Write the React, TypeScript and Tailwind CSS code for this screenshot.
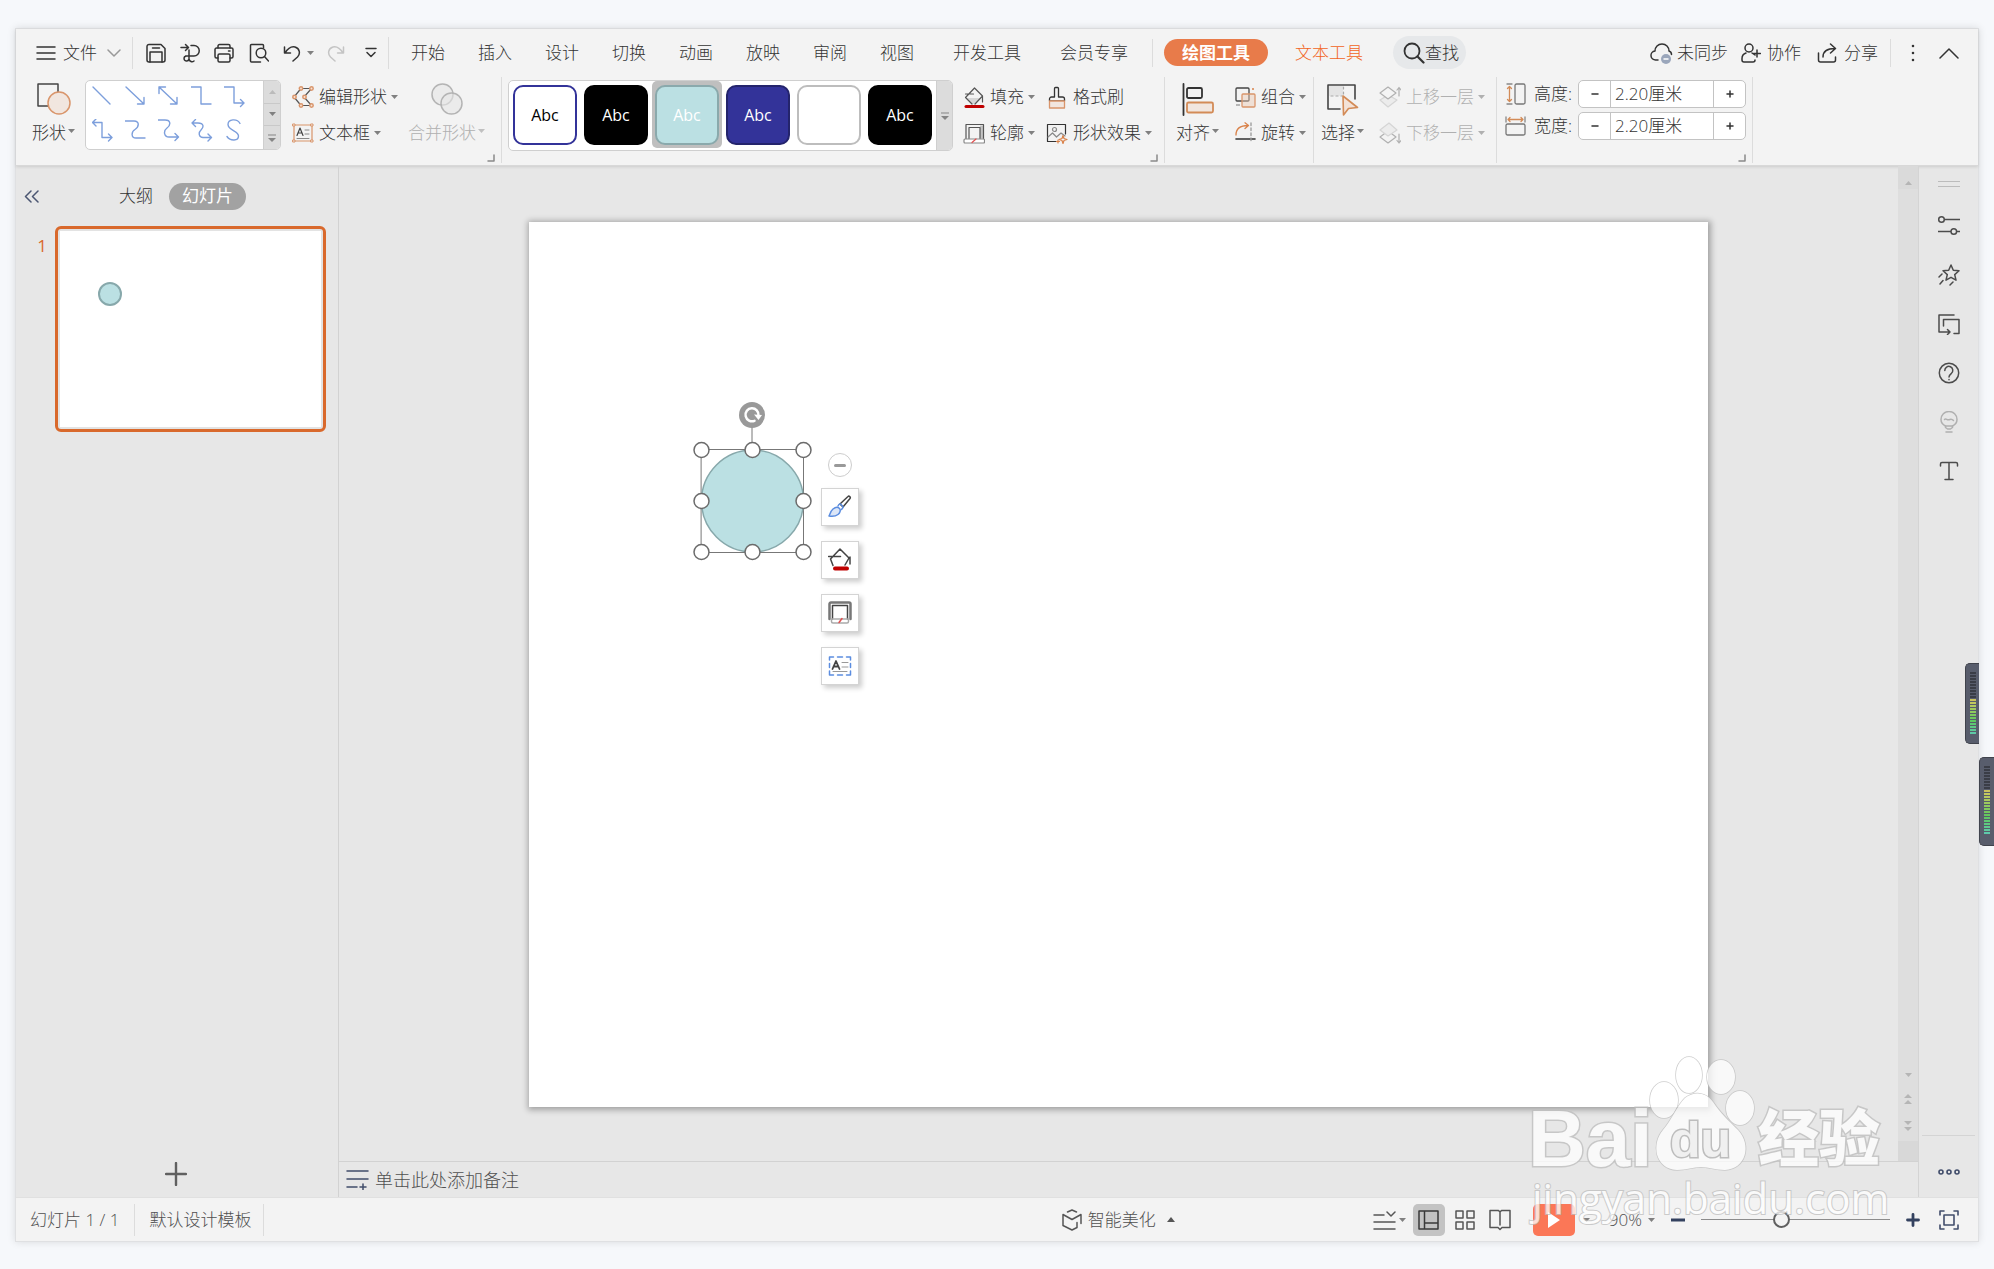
import React, { useState } from "react";

const FONT = "font-['Open_Sans','Noto_Sans_CJK_SC',sans-serif]";

type SvgProps = {
  w: number;
  h: number;
  className?: string;
  sw?: number;
  children: React.ReactNode;
};

function Svg({ w, h, className = "", sw = 1.5, children }: SvgProps) {
  return (
    <svg
      width={w}
      height={h}
      viewBox={`0 0 ${w} ${h}`}
      fill="none"
      stroke="currentColor"
      strokeWidth={sw}
      strokeLinecap="round"
      strokeLinejoin="round"
      className={`shrink-0 ${className}`}
      aria-hidden="true"
    >
      {children}
    </svg>
  );
}

function Caret({ className = "text-[#808080]" }: { className?: string }) {
  return (
    <Svg w={7} h={4} className={className}>
      <path d="M0 0h7L3.5 4z" fill="currentColor" stroke="none" />
    </Svg>
  );
}

function VSep({ className = "" }: { className?: string }) {
  return <div className={`w-px shrink-0 bg-[#dcdcdc] ${className}`} />;
}

function Launcher({ className = "" }: { className?: string }) {
  return (
    <button aria-label="更多设置" className={`h-2 w-2 shrink-0 self-end ${className}`}>
      <Svg w={8} h={8} className="text-[#8a8a8a]">
        <path d="M7 1v6H1" />
      </Svg>
    </button>
  );
}

/* ---------- icons ---------- */

const FillIcon = () => (
  <Svg w={22} h={22} sw={1.2} className="text-[#555]">
    <path d="M3 12h14l-6 6H9z" fill="#d6d6d6" stroke="none" />
    <path d="M9 18 2.500 11.500 11.500 2l8 8L12 18M2.500 8h8M19.500 10v6" />
    <path d="M3 20.500h17" stroke="#c00000" strokeWidth="3" />
  </Svg>
);

const OutlineIcon = () => (
  <Svg w={22} h={22} sw={1.2} className="text-[#555]">
    <path d="M17 3.500h3.500v13H17z" fill="#c4c4c4" stroke="none" />
    <path d="M3 16.500v-14h17.500v14M6 16.500v-11h11v11" />
    <rect x="1" y="17" width="20.500" height="4" rx="1" fill="#fff" stroke="#888" />
    <path d="m9 20.500 4-3.500" stroke="#e05050" />
  </Svg>
);

const ZoomLens = () => (
  <Svg w={22} h={22} sw={1.8}>
    <circle cx="9" cy="9" r="7.500" />
    <path d="m14.500 14.500 6 6" strokeWidth="2.200" />
  </Svg>
);

const quickIcons = [
  {
    label: "保存",
    art: (
      <>
        <path d="M3 1.500h12l4 4V17a2 2 0 0 1-2 2H3a2 2 0 0 1-2-2V3.500a2 2 0 0 1 2-2z" />
        <path d="M4 19V9h12v10M6.500 5h7" />
      </>
    ),
  },
  {
    label: "输出为PDF",
    art: (
      <>
        <path d="M1 4.500h7M5.500 1.500l3 3-3 3" />
        <path d="M11 2.500h3a5 5 0 0 1 0 10.500H5.500M9 7v9a2.500 2.500 0 1 1-2.500-3H9M9 16c.5 2.500 3 3.500 5 2" />
      </>
    ),
  },
  {
    label: "打印",
    art: (
      <>
        <path d="M4 5V3a1.500 1.500 0 0 1 1.500-1.500h9A1.500 1.500 0 0 1 16 3v2" />
        <path d="M4 15H2.500A1.500 1.500 0 0 1 1 13.500v-7A1.500 1.500 0 0 1 2.500 5h15A1.500 1.500 0 0 1 19 6.500v7a1.500 1.500 0 0 1-1.500 1.500H16M14.500 8h1.500" />
        <rect x="4" y="11" width="12" height="8" rx="1.500" />
      </>
    ),
  },
  {
    label: "打印预览",
    art: (
      <>
        <path d="M15.500 5V2.500a1 1 0 0 0-1-1h-11a1 1 0 0 0-1 1V18a1 1 0 0 0 1 1h9" />
        <circle cx="13" cy="10" r="4.800" />
        <path d="m16.500 13.500 4 4.500" />
      </>
    ),
  },
];

const lineShapes = [
  <path d="m1 1 17 17" />,
  <path d="m1 1 18 17M12.500 18H19v-6.500" />,
  <path d="m1 1 18 17M12.500 18H19v-6.500M1 7.500V1h6.500" />,
  <path d="M0 1h10v17h10" />,
  <path d="M0 1h10v16h9.500M16.500 13.500 20 17l-3.500 3.500" />,
  <path d="M1 3.500h9v15h9.500M16.500 15 20 18.500 16.500 22M4 0 .5 3.500 4 7" />,
  <path d="M0 2h9c6 0 5 6 1 8.500S6 19 11 19h9" />,
  <path d="M0 1h7c6 0 6 5 2 8s-3 9 2 9h9M17 14.500l3.500 3.500L17 21.500" />,
  <path d="M1 4h6c6 0 6 4 3 7s-2 7.500 2 7.500h8M17 15l3.500 3.500L17 22M4.500.5 1 4l3.500 3.500" />,
  <path d="M16 4.500C13-1 4 0 4 5.500c0 6 10.500 6 10.500 11.500 0 5-8 5.500-11.500.5" />,
];

const styleTiles = [
  { text: "Abc", cls: "border-[#333399] bg-white text-black" },
  { text: "Abc", cls: "border-black bg-black text-white" },
  { text: "Abc", cls: "border-[#8aa9ac] bg-[#bbe0e3] text-white", on: true },
  { text: "Abc", cls: "border-[#24246c] bg-[#333399] text-white" },
  { text: "", cls: "border-[#bdbdbd] bg-white text-white" },
  { text: "Abc", cls: "border-black bg-black text-white" },
];

/* ---------- header ---------- */

function MenuRow() {
  const tabs = ["开始", "插入", "设计", "切换", "动画", "放映", "审阅", "视图"];
  return (
    <div className="flex h-12 items-center pb-px pl-5 pr-[19px]">
      <button className="flex items-center">
        <Svg w={20} h={14}>
          <path d="M1 1h18M1 7h18M1 13h18" />
        </Svg>
        <span className="ml-[7px]">文件</span>
        <Svg w={14} h={8} className="ml-[10px] text-[#999]">
          <path d="m1 1 6 6 6-6" />
        </Svg>
      </button>
      <VSep className="ml-[11px] h-8" />
      <div className="ml-[13px] flex gap-[13px]">
        {quickIcons.map((q) => (
          <button key={q.label} aria-label={q.label}>
            <Svg w={21} h={20}>
              {q.art}
            </Svg>
          </button>
        ))}
      </div>
      <button aria-label="撤销" className="ml-[14px] flex items-center gap-[6px]">
        <Svg w={18} h={18}>
          <path d="M1.500 3v6h6M2 9c2.500-4 6-7 10-6 5 1.500 5.500 7 2.500 10l-4.500 4" />
        </Svg>
        <Caret />
      </button>
      <button aria-label="恢复" className="ml-[13px] text-[#c4c4c4]">
        <Svg w={18} h={18}>
          <path d="M16.500 3v6h-6M16 9c-2.500-4-6-7-10-6C1 4.500.5 10 3.500 13L8 17" />
        </Svg>
      </button>
      <button aria-label="自定义快速访问" className="ml-5">
        <Svg w={12} h={11}>
          <path d="M1 1.500h10M2 5.500l4 4 4-4" />
        </Svg>
      </button>
      <VSep className="ml-[11px] h-8" />
      <nav className="ml-[22px] flex items-center">
        <div className="flex gap-[33px]">
          {tabs.map((t) => (
            <button key={t}>{t}</button>
          ))}
        </div>
        <button className="ml-[39px]">开发工具</button>
        <button className="ml-[39px]">会员专享</button>
        <VSep className="ml-6 h-7" />
        <button className="ml-[11px] h-[27px] rounded-full bg-[#e87b4a] px-[18px] font-bold text-white">
          绘图工具
        </button>
        <button className="ml-[27px] text-[#f26322]">文本工具</button>
        <button className="ml-[30px] flex h-[33px] items-center rounded-full bg-[#e6e8ea] pl-[10px] pr-[7px]">
          <ZoomLens />
          <span>查找</span>
        </button>
      </nav>
      <div className="ml-auto flex items-center">
        <button className="flex items-center gap-1">
          <Svg w={23} h={22}>
            <path d="M8 18H6a4.500 4.500 0 0 1-1-9C5 5 8 2 12 2s7 3 7 7c1.500.5 2.500 2 2.500 3.500" />
            <circle cx="16" cy="17" r="5" fill="#9aa6bb" stroke="none" />
            <path d="M14 17h4" stroke="#fff" />
          </Svg>
          <span>未同步</span>
        </button>
        <button className="ml-[13px] flex items-center gap-[6px]">
          <Svg w={20} h={20}>
            <circle cx="8" cy="5" r="4" />
            <path d="M5 10c-3 1-4 3-4 5.500V17a2 2 0 0 0 2 2h9a2 2 0 0 0 2-2M11 10l3 2M16 7v7M12.500 10.500h7" />
          </Svg>
          <span>协作</span>
        </button>
        <button className="ml-4 flex items-center gap-[6px]">
          <Svg w={21} h={20}>
            <path d="M1.500 10v7a2 2 0 0 0 2 2h13a2 2 0 0 0 2-2v-3M6 14c0-5 4-8.500 12-8.500M13.500 1l5 4.500-5 4.500" />
          </Svg>
          <span>分享</span>
        </button>
        <VSep className="ml-3 h-7" />
        <button aria-label="更多" className="ml-5">
          <Svg w={4} h={18}>
            <path d="M2 2v0M2 9v0M2 16v0" strokeWidth="2.600" />
          </Svg>
        </button>
        <button aria-label="收起功能区" className="ml-6">
          <Svg w={20} h={12}>
            <path d="m1 11 9-9 9 9" />
          </Svg>
        </button>
      </div>
    </div>
  );
}

type BtnProps = {
  icon: React.ReactNode;
  label: string;
  caret?: boolean;
  disabled?: boolean;
};

function BigButton({ icon, label, disabled }: BtnProps) {
  return (
    <button
      disabled={disabled}
      className={`flex shrink-0 flex-col items-center ${disabled ? "text-[#b0b0b0]" : ""}`}
    >
      <span className="flex h-10 items-center">{icon}</span>
      <span className="flex h-7 items-center gap-[2px]">
        {label}
        <Caret className={disabled ? "mb-1 text-[#c0c0c0]" : "mb-1 text-[#808080]"} />
      </span>
    </button>
  );
}

function RowButton({ icon, label, caret = true, disabled }: BtnProps) {
  return (
    <button
      disabled={disabled}
      className={`flex h-9 items-center ${disabled ? "text-[#b0b0b0]" : ""}`}
    >
      <span className="flex w-[22px] justify-center">{icon}</span>
      <span className="ml-[5px]">{label}</span>
      {caret && (
        <Caret className={disabled ? "ml-1 text-[#b0b0b0]" : "ml-1 text-[#808080]"} />
      )}
    </button>
  );
}

function SizeField({ id, label, icon }: { id: string; label: string; icon: React.ReactNode }) {
  const [value, setValue] = useState("2.20厘米");
  const step = (d: number) => setValue((parseFloat(value) + d).toFixed(2) + "厘米");
  return (
    <div className="flex items-center">
      <span className="flex w-[21px] justify-center">{icon}</span>
      <label htmlFor={id} className="ml-2 w-[44px]">
        {label}
      </label>
      <div className="flex h-7 w-[168px] overflow-hidden rounded-[5px] border border-[#c3c3c3] bg-white">
        <button
          aria-label="减小"
          onClick={() => step(-0.1)}
          className="flex w-8 items-center justify-center border-r border-[#c3c3c3]"
        >
          <Svg w={8} h={8}>
            <path d="M1 4h6" />
          </Svg>
        </button>
        <input
          id={id}
          value={value}
          onChange={(e) => setValue(e.target.value)}
          className="min-w-0 flex-1 pl-1 outline-none"
        />
        <button
          aria-label="增大"
          onClick={() => step(0.1)}
          className="flex w-8 items-center justify-center border-l border-[#c3c3c3]"
        >
          <Svg w={8} h={8}>
            <path d="M1 4h6M4 1v6" />
          </Svg>
        </button>
      </div>
    </div>
  );
}

function Ribbon() {
  const [style, setStyle] = useState(2);
  return (
    <div className="flex h-[88px] pb-[2px] pl-4">
      <div className="flex pt-[2px]">
        <BigButton
          label="形状"
          icon={
            <Svg w={34} h={32}>
              <rect x="1" y="1" width="20" height="22" stroke="#444" />
              <circle cx="22" cy="20" r="11" fill="#f1e6df" stroke="#d9956b" />
            </Svg>
          }
        />
        <div className="ml-[10px] mt-px flex h-[70px] w-[196px] overflow-hidden rounded-[5px] border border-[#cfcfcf] bg-white">
          <div className="grid flex-1 grid-cols-[repeat(5,22px)] gap-x-[11px] gap-y-2 py-[5px] pl-[6px] text-[#7d9fdc]">
            {lineShapes.map((s, i) => (
              <button key={i} aria-label={`线条 ${i + 1}`} className="flex">
                <Svg w={22} h={24} sw={1.4}>
                  {s}
                </Svg>
              </button>
            ))}
          </div>
          <div className="grid w-[17px] grid-rows-3 divide-y divide-[#c9c9c9] border-l border-[#cfcfcf] bg-[#dcdcdc]">
            <button aria-label="上一行" className="flex items-center justify-center">
              <Caret className="rotate-180 text-[#bbb]" />
            </button>
            <button aria-label="下一行" className="flex items-center justify-center">
              <Caret />
            </button>
            <button aria-label="全部形状" className="flex items-center justify-center">
              <Svg w={8} h={8} className="text-[#858585]">
                <path d="M0 1h8" strokeWidth="1" />
                <path d="M0 4h8L4 8z" fill="currentColor" stroke="none" />
              </Svg>
            </button>
          </div>
        </div>
        <div className="ml-[11px] flex flex-col">
          <RowButton
            label="编辑形状"
            icon={
              <Svg w={22} h={22}>
                <path d="M19.500 2.500H9L2 11l7 8.500h10.500L12 11z" stroke="#555" strokeWidth="1.200" />
                <g fill="#f6e4d8" stroke="#d9956b">
                  <circle cx="19.500" cy="2.500" r="1.700" />
                  <circle cx="9" cy="2.500" r="1.700" />
                  <circle cx="2.500" cy="11" r="1.700" />
                  <circle cx="9" cy="19.500" r="1.700" />
                  <circle cx="19.500" cy="19.500" r="1.700" />
                  <circle cx="12.500" cy="11" r="1.700" />
                </g>
              </Svg>
            }
          />
          <RowButton
            label="文本框"
            icon={
              <Svg w={22} h={20} sw={1.2}>
                <rect x="2" y="2" width="18" height="16" stroke="#d9956b" />
                <path d="M5 12.500 8 5l3 7.500M6 10h4" stroke="#444" />
                <path d="M13 7h4M13 11h4M5 15.500h12" stroke="#888" strokeWidth="1" />
                <path d="M1 1h2v2H1zM19 1h2v2h-2zM1 17h2v2H1zM19 17h2v2h-2z" fill="#f4f4f4" stroke="#d9956b" strokeWidth="1" />
              </Svg>
            }
          />
        </div>
        <div className="ml-[10px] flex">
          <BigButton
            label="合并形状"
            disabled
            icon={
              <Svg w={32} h={32} className="text-[#b4b4b4]">
                <circle cx="11.500" cy="11.500" r="10.500" fill="#ebebeb" />
                <circle cx="20.500" cy="20.500" r="10.500" fill="#e6e6e6" fillOpacity=".6" />
              </Svg>
            }
          />
        </div>
        <Launcher className="mb-px ml-[2px]" />
      </div>

      <VSep className="ml-[6px]" />
      <div className="flex pt-[3px]">
        <div className="ml-[6px] flex h-[71px] overflow-hidden rounded-[5px] border border-[#cfcfcf] bg-white">
          <div className="flex items-start pl-px">
            {styleTiles.map((t, i) => (
              <button
                key={i}
                aria-label={`样式 ${i + 1}`}
                onClick={() => setStyle(i)}
                className={`mr-px flex h-[67px] w-[70px] items-center justify-center rounded-[5px] ${
                  style === i ? "bg-[#bfbfbf]" : ""
                }`}
              >
                <span
                  className={`flex h-[60px] w-16 items-center justify-center rounded-[10px] border-2 text-base font-normal ${t.cls}`}
                >
                  {t.text}
                </span>
              </button>
            ))}
          </div>
          <button
            aria-label="更多样式"
            className="flex w-4 items-center justify-center border-l border-[#cfcfcf] bg-[#dcdcdc]"
          >
            <Svg w={8} h={8} className="text-[#858585]">
              <path d="M0 1h8" strokeWidth="1" />
              <path d="M0 4h8L4 8z" fill="currentColor" stroke="none" />
            </Svg>
          </button>
        </div>
        <div className="-mt-px ml-[10px] flex flex-col">
          <RowButton label="填充" icon={<FillIcon />} />
          <RowButton label="轮廓" icon={<OutlineIcon />} />
        </div>
        <div className="-mt-px ml-[11px] flex flex-col">
          <RowButton
            label="格式刷"
            caret={false}
            icon={
              <Svg w={18} h={23} sw={1.3}>
                <path d="M6.500 11V2.500a1 1 0 0 1 1-1h2a1 1 0 0 1 1 1V11h4a2 2 0 0 1 2 2v2h-15v-2a2 2 0 0 1 2-2z" />
                <path d="M1.500 15h15v7h-15z" fill="#f1e6df" stroke="#d9956b" />
              </Svg>
            }
          />
          <RowButton
            label="形状效果"
            icon={
              <Svg w={22} h={22} sw={1.2}>
                <path d="M10 19.500H1.500v-17h18V12" />
                <circle cx="8.500" cy="7.500" r="2" stroke="#888" />
                <path d="m2 15 4.500-4 4 4 4.500-4 4 3" stroke="#888" />
                <path d="M17 13.500l1 3 3 1-3 1-1 3-1-3-3-1 3-1zM12 18v3M10.500 19.500h3" stroke="#d9824a" />
              </Svg>
            }
          />
        </div>
        <Launcher className="-ml-[2px] mb-px" />
      </div>

      <VSep className="ml-[6px]" />
      <div className="flex pt-[2px]">
        <div className="ml-[11px] flex">
          <BigButton
            label="对齐"
            icon={
              <Svg w={32} h={33} sw={1.8}>
                <path d="M1.500 1v31" stroke="#333" />
                <rect x="5" y="5" width="15" height="10" rx="1.500" stroke="#333" />
                <rect x="5" y="19.500" width="26" height="10" rx="1.500" fill="#f1e6df" stroke="#d38b57" />
              </Svg>
            }
          />
        </div>
        <div className="ml-[15px] flex flex-col">
          <RowButton
            label="组合"
            icon={
              <Svg w={22} h={22} sw={1.3}>
                <rect x="2" y="2" width="13" height="13" rx="1" stroke="#444" />
                <rect x="8" y="8" width="13" height="13" rx="1" fill="#eac9b3" fillOpacity=".45" stroke="#d9956b" />
                <path d="M3 19v0M5 19v0" stroke="#444" />
                <path d="M19 3v0" stroke="#d9824a" strokeWidth="2" />
              </Svg>
            }
          />
          <RowButton
            label="旋转"
            icon={
              <Svg w={22} h={22} sw={1.3}>
                <path d="M2 13C2 7 6 3.500 14 3.500M11 .8l3.500 2.700L11 6.500" stroke="#d9824a" />
                <path d="M2 17h19" stroke="#333" strokeWidth="1.600" />
                <path d="M17 1v20" stroke="#999" strokeDasharray="2.500 2.500" />
              </Svg>
            }
          />
        </div>
      </div>

      <VSep className="ml-[7px]" />
      <div className="flex pt-[2px]">
        <div className="ml-[7px] flex">
          <BigButton
            label="选择"
            icon={
              <Svg w={33} h={33} sw={1.6}>
                <path d="M2 2h27v14M2 2v24h12" stroke="#444" />
                <path d="M3 3h14v10H3z" fill="#e4e4e4" stroke="none" />
                <path d="M5 13h11M17.500 4v9" stroke="#aaa" strokeDasharray="2 3" strokeWidth="1.200" />
                <path d="m17 13 .5 19 5-6.500 9-1z" fill="#f3e2d7" stroke="#d38b57" />
              </Svg>
            }
          />
        </div>
        <div className="ml-[15px] flex flex-col">
          <RowButton
            label="上移一层"
            disabled
            icon={
              <Svg w={22} h={22} sw={1.2}>
                <path d="m1 14 8-5 9 5-9 7z" fill="#ececec" stroke="#d5d5d5" />
                <path d="m1 7 8-6 8 6-8 6z" fill="#f4f4f4" />
                <path d="M20 10V2M18 4l2-2.500L22 4" />
              </Svg>
            }
          />
          <RowButton
            label="下移一层"
            disabled
            icon={
              <Svg w={22} h={22} sw={1.2}>
                <path d="m1 15 8-6 8 6-8 6z" />
                <path d="m1 8 9-7 8 7-9 6z" fill="#ececec" stroke="#d5d5d5" />
                <path d="M20 12v8M18 18.500l2 2.500 2-2.500" />
              </Svg>
            }
          />
        </div>
      </div>

      <VSep className="ml-[11px]" />
      <div className="ml-2 flex flex-col gap-1 pt-[3px]">
        <SizeField
          id="shape-height"
          label="高度:"
          icon={
            <Svg w={20} h={22} sw={1.3}>
              <rect x="9" y="1" width="10" height="20" rx="1.500" stroke="#777" />
              <path d="M1 1h5M1 21h5" stroke="#888" />
              <path d="M3.500 3.500v15M1.500 5.500l2-2 2 2M1.500 16.500l2 2 2-2" stroke="#d38b57" />
            </Svg>
          }
        />
        <SizeField
          id="shape-width"
          label="宽度:"
          icon={
            <Svg w={21} h={20} sw={1.3}>
              <rect x="1" y="8" width="19" height="11" rx="1.500" stroke="#777" />
              <path d="M1 1v5M20 1v5" stroke="#888" />
              <path d="M3 3.500h15M5 1.500l-2 2 2 2M16 1.500l2 2-2 2" stroke="#d38b57" />
            </Svg>
          }
        />
        <Launcher className="mb-px mt-auto" />
      </div>
      <VSep className="ml-[6px]" />
    </div>
  );
}

/* ---------- body ---------- */

function SlidePane() {
  return (
    <aside className="flex w-[323px] shrink-0 flex-col border-r border-[#d2d2d2]">
      <div className="flex h-[60px] items-center pl-2">
        <button aria-label="收起" className="text-[#4b5672]">
          <Svg w={15} h={13}>
            <path d="m7 1-5.500 5.500L7 12M14 1 8.500 6.500 14 12" />
          </Svg>
        </button>
        <button className="ml-20">大纲</button>
        <button className="ml-4 h-[27px] rounded-full bg-[#a2a2a2] px-[13px] font-normal text-white">
          幻灯片
        </button>
      </div>
      <div className="flex pr-3">
        <span className="w-[39px] pr-2 pt-2 text-right font-normal text-[#d9692c]">1</span>
        <button aria-label="幻灯片 1" className="flex-1 rounded-md border-[3px] border-[#d9692c] bg-[#e3e3e3] p-[2px]">
          <div className="relative aspect-[4/3] w-full bg-white">
            <div className="absolute left-[14.6%] top-[25.8%] aspect-square w-[9.2%] rounded-full border-2 border-[#87a8ab] bg-[#bbe0e3]" />
          </div>
        </button>
      </div>
      <button aria-label="新建幻灯片" className="mb-[11px] ml-[149px] mt-auto self-start text-[#606060]">
        <Svg w={22} h={24} sw={2.4}>
          <path d="M11 1v22M1 12h20" />
        </Svg>
      </button>
    </aside>
  );
}

const floatTools = [
  {
    label: "样式",
    art: (
      <>
        <path d="M12 9 20 1.500c1-1 3 .5 2 2L15 12z" />
        <path d="M10 11c1-2 2-2.500 3-1.500l1.500 1.500c1 1 0 2.500-1 3.500" stroke="#5b8de0" />
        <path d="M1 21c1-1.500 1.500-5 4-7s5-2 6.500-.500S12 18 10 19.500 4 21.500 1 21z" fill="#dce6f7" stroke="#5b8de0" />
      </>
    ),
  },
  {
    label: "填充",
    art: (
      <>
        <path d="M5 17.500 2.500 11 12 1l9 9-4 7M.5 8.500h12M22 9v7" />
        <path d="M7 20.500h12" stroke="#c00000" strokeWidth="4" />
      </>
    ),
  },
  {
    label: "轮廓",
    art: (
      <>
        <path d="M1.500 18V3a1.500 1.500 0 0 1 1.500-1.500h18A1.500 1.500 0 0 1 22.500 3v15" strokeWidth="2.500" stroke="#777" />
        <path d="M4.500 18V4.500h15V18" />
        <path d="M3.500 18h17v2.500a1.500 1.500 0 0 1-1.500 1.500H5a1.500 1.500 0 0 1-1.500-1.500z" stroke="#aaa" />
        <path d="m11 21.500 3-4" stroke="#e05050" />
      </>
    ),
  },
  {
    label: "文本",
    art: (
      <>
        <path d="M1.500 6V3h4M9.500 3h5M18.500 3h4v3M22.500 9.500v4M22.500 17v4h-4M14.500 21h-5M5.500 21h-4v-4M1.500 13.500v-4" stroke="#5b8de0" />
        <path d="m4.500 15 3.500-8 3.500 8M5.500 12.500h5" strokeWidth="1.800" />
        <path d="M14 8.500h6M14 13h6M5 17.500h14" stroke="#999" strokeWidth="1" />
      </>
    ),
  },
];

function Slide() {
  const handles = [
    [9, 49],
    [60, 49],
    [111, 49],
    [9, 100],
    [111, 100],
    [9, 151],
    [60, 151],
    [111, 151],
  ];
  return (
    <div className="relative aspect-[4/3] w-full bg-white shadow-[1px_1px_6px_2px_rgba(0,0,0,0.3)]">
      <Svg w={120} h={160} className="absolute left-[163px] top-[179px]" sw={1}>
        <path d="M60 26v23M9.500 48.500h102v103h-102z" stroke="#777" />
        <circle cx="60.500" cy="100" r="51" fill="#bbe0e3" stroke="#87a8ab" strokeWidth="1.500" />
        {handles.map(([x, y]) => (
          <circle key={`${x}-${y}`} cx={x + 0.5} cy={y} r="7.500" fill="#fff" stroke="#6b6b6b" strokeWidth="1.500" />
        ))}
        <circle cx="60" cy="14" r="13" fill="#999" stroke="none" />
        <path d="M62.500 19.800a6.500 6.500 0 1 1 4-5.300" stroke="#fff" strokeWidth="2.500" />
        <path d="m62 13.500 8 .5-3.500 5z" fill="#fff" stroke="none" />
      </Svg>
      <div className="absolute left-[292px] top-[231px] flex flex-col items-center gap-[15px]">
        <button
          aria-label="收起工具"
          className="-mb-1 flex h-6 w-6 items-center justify-center rounded-full border-[1.5px] border-[#cdcdcd] bg-white"
        >
          <span className="h-[3px] w-3 rounded-full bg-[#999]" />
        </button>
        {floatTools.map((t) => (
          <button
            key={t.label}
            aria-label={t.label}
            className="flex h-[38px] w-[38px] items-center justify-center border border-[#d4d4d4] bg-white shadow-[3px_3px_5px_rgba(0,0,0,0.2)]"
          >
            <Svg w={24} h={24} className="text-[#444]">
              {t.art}
            </Svg>
          </button>
        ))}
      </div>
    </div>
  );
}

function ScrollBar() {
  return (
    <div className="flex w-5 shrink-0 flex-col items-center bg-[#dedede] text-[#b5b5b5]">
      <div className="flex w-full justify-center bg-[#dadada] pb-1 pt-[15px]">
        <Caret className="rotate-180 text-[#b5b5b5]" />
      </div>
      <div className="mt-auto flex flex-col items-center gap-[17px]">
        <Caret className="text-[#b5b5b5]" />
        <Svg w={8} h={10}>
          <path d="M0 4h8L4 0zM0 10h8L4 6z" fill="currentColor" stroke="none" />
        </Svg>
        <Svg w={8} h={10}>
          <path d="M0 0h8L4 4zM0 6h8l-4 4z" fill="currentColor" stroke="none" />
        </Svg>
      </div>
      <div className="mt-[10px] h-5 w-full bg-[#d8d8d8]" />
    </div>
  );
}

const railTools = [
  {
    label: "对象属性",
    art: <path d="M6.500 4.500H22M0 16.500h12.500M19 16.500h3M.7 4.500a2.800 2.800 0 1 0 5.600 0 2.800 2.800 0 1 0-5.600 0zM13 16.500a2.800 2.800 0 1 0 5.600 0 2.800 2.800 0 1 0-5.600 0z" />,
  },
  {
    label: "动画",
    art: (
      <>
        <path d="m13 1 2.300 5.200 5.700.6-4.300 3.800 1.300 5.600-5-2.900-5 2.900 1.300-5.600L5 6.800l5.700-.6z" />
        <path d="m1 13 3-3M2 20l3-3.500M12 21l3-3" />
      </>
    ),
  },
  {
    label: "切换",
    art: (
      <>
        <path d="M16 2H1v17h11M9.500 16.500 12 19l-2.500 2.500" />
        <path d="M5.500 13V6.500H21v14h-5" />
      </>
    ),
  },
  {
    label: "帮助",
    art: (
      <>
        <circle cx="11" cy="11" r="9.700" />
        <path d="M6.800 8.500a4 4 0 1 1 6.500 3c-1.500 1.200-2.300 1.800-2.300 3.500M11 17.500v.3" />
      </>
    ),
  },
  {
    label: "提示",
    dim: true,
    art: (
      <>
        <path d="M7.500 15C4.500 13.500 3 11.500 3 8.500a8 8 0 0 1 16 0c0 3-1.500 5-4.500 6.500z" />
        <path d="M6.500 8.500c1.500-1.500 2.500 1 4.500.2s3-1 4.500.8M7.500 15v1.500l2 1.500h3l2-1.500V15M8 21h6" />
      </>
    ),
  },
  { label: "文本", art: <path d="M2.500 6V4a1.500 1.500 0 0 1 1.500-1.500h14A1.500 1.500 0 0 1 19.500 4v2M11 2.500v17M7 19.500h8" /> },
];

function ToolRail() {
  return (
    <div className="flex w-[60px] shrink-0 flex-col items-center border-l border-[#d4d4d4]">
      <div className="mt-[15px] h-[6px] w-[22px] border-y border-[#bcbcbc]" />
      <div className="mt-[28px] flex flex-col gap-[27px]">
        {railTools.map((t) => (
          <button key={t.label} aria-label={t.label} className={t.dim ? "text-[#b0b0b0]" : "text-[#4c4c4c]"}>
            <Svg w={22} h={22}>
              {t.art}
            </Svg>
          </button>
        ))}
      </div>
      <div className="mt-auto h-px w-[53px] bg-[#d4d4d4]" />
      <button aria-label="更多工具" className="mb-[21px] mt-8 text-[#414d6b]">
        <Svg w={22} h={8} sw={1.6}>
          <circle cx="3" cy="4" r="2" />
          <circle cx="11" cy="4" r="2" />
          <circle cx="19" cy="4" r="2" />
        </Svg>
      </button>
    </div>
  );
}

function StatusBar() {
  return (
    <footer className="flex h-11 shrink-0 items-center border-t border-[#e0e0e0] bg-[#f3f3f3] pl-[14px] pr-[19px] text-[#505050]">
      <span>幻灯片 1 / 1</span>
      <VSep className="ml-[15px] h-8" />
      <span className="ml-[14px]">默认设计模板</span>
      <VSep className="ml-3 h-8" />
      <button className="ml-auto mr-[198px] flex items-center">
        <Svg w={20} h={22} className="text-[#555]">
          <path d="m5.500 3 4.500-2 4.500 2M1 5.500l9 5 9-5v9M1 5.500v11L10 21l5-2.500v-5" />
        </Svg>
        <span className="ml-[6px]">智能美化</span>
        <Svg w={8} h={5} className="ml-[11px] text-[#555]">
          <path d="M0 5h8L4 0z" fill="currentColor" stroke="none" />
        </Svg>
      </button>
      <button aria-label="备注" className="flex items-center gap-[3px] text-[#555]">
        <Svg w={23} h={20}>
          <path d="M1 5h10M14 2l4 4 4-4M1 12h21M1 19h21" />
        </Svg>
        <Caret />
      </button>
      <button
        aria-label="普通视图"
        className="ml-[7px] flex h-8 w-8 items-center justify-center rounded-[5px] bg-[#c3c3c3] text-[#3a3a3a]"
      >
        <Svg w={21} h={20}>
          <path d="M1 1h19v18H1zM6.500 1v18M6.500 13H20" />
        </Svg>
      </button>
      <button aria-label="幻灯片浏览" className="ml-[10px] text-[#555]">
        <Svg w={20} h={20}>
          <path d="M1 1h7v7H1zM12 1h7v7h-7zM1 12h7v7H1zM12 12h7v7h-7z" />
        </Svg>
      </button>
      <button aria-label="阅读视图" className="ml-[14px] text-[#555]">
        <Svg w={22} h={22}>
          <path d="M11 3 9.500 1.500H1v17h8l2 2 2-2h8v-17h-8.500zM11 3v13" />
        </Svg>
      </button>
      <button aria-label="放映" className="ml-[22px] flex h-8 w-[42px] items-center justify-center rounded-[5px] bg-[#fb7757]">
        <Svg w={14} h={18}>
          <path d="M1 1v16l12-8z" fill="#fff" stroke="none" />
        </Svg>
      </button>
      <button aria-label="放映选项" className="ml-2">
        <Caret />
      </button>
      <button className="ml-[19px] flex items-center gap-[6px]">
        <span>90%</span>
        <Caret />
      </button>
      <button aria-label="缩小" className="ml-4 text-[#33415f]">
        <Svg w={14} h={14} sw={3}>
          <path d="M0 7h14" strokeLinecap="butt" />
        </Svg>
      </button>
      <input
        type="range"
        aria-label="缩放比例"
        min={0}
        max={100}
        defaultValue={42}
        className="ml-4 h-[18px] w-[189px] appearance-none bg-[linear-gradient(#8c8c8c,#8c8c8c)] bg-[length:100%_1px] bg-center bg-no-repeat [&::-webkit-slider-thumb]:h-[17px] [&::-webkit-slider-thumb]:w-[17px] [&::-webkit-slider-thumb]:appearance-none [&::-webkit-slider-thumb]:rounded-full [&::-webkit-slider-thumb]:border-2 [&::-webkit-slider-thumb]:border-[#5f5f5f] [&::-webkit-slider-thumb]:bg-[#f3f3f3]"
      />
      <button aria-label="放大" className="ml-4 text-[#33415f]">
        <Svg w={14} h={14} sw={2.8}>
          <path d="M1.500 7h11M7 1.500v11" />
        </Svg>
      </button>
      <button aria-label="适应窗口" className="ml-[19px] text-[#414d6b]">
        <Svg w={20} h={20} sw={1.6}>
          <path d="M1 5V1h4M15 1h4v4M19 15v4h-4M5 19H1v-4M5 5h10v10H5z" />
        </Svg>
      </button>
    </footer>
  );
}

/* level meter docked at the window's right edge */
function Meter({ className, h, dark }: { className: string; h: number; dark: number }) {
  const count = Math.floor((h - 18) / 3);
  return (
    <div className={`absolute flex flex-col items-center gap-px overflow-hidden rounded-l-[5px] border border-r-0 border-[#40434c] bg-[#585d6c] pt-2 ${className}`}>
      {Array.from({ length: count }, (_, i) => (
        <div
          key={i}
          className="h-[2px] w-[6px] shrink-0"
          style={{
            background: i < dark ? "#3a3d46" : `hsl(${55 + ((i - dark) / (count - dark)) * 115} 50% 58%)`,
          }}
        />
      ))}
    </div>
  );
}

function Watermark() {
  return (
    <svg
      viewBox="0 0 370 180"
      className="pointer-events-none absolute bottom-[41px] right-[103px] w-[370px] font-bold"
      fill="#fff"
      stroke="#bdbdbd"
      strokeWidth="1.500"
      opacity=".75"
      paintOrder="stroke"
    >
      <g strokeWidth="3">
        <text x="7" y="118" fontSize="80" fontFamily="Liberation Sans">
          Bai
        </text>
        <text x="237" y="113" fontSize="61" fontFamily="Noto Sans CJK SC" fontWeight="900">
          经验
        </text>
      </g>
      <ellipse cx="143" cy="52" rx="14" ry="18" />
      <ellipse cx="168" cy="27" rx="13" ry="18" />
      <ellipse cx="200" cy="29" rx="14" ry="17" />
      <ellipse cx="219" cy="60" rx="14" ry="17" />
      <path d="M164 60c9-7 21-6 28 4 8 12 15 18 25 28 14 15 8 39-13 40-10 0-16-3-24-3s-14 3-24 3c-22-1-26-26-14-40 9-10 13-23 22-32z" transform="translate(0 -10)" />
      <text x="149" y="109" fontSize="50" fontFamily="Liberation Sans" fill="#f3f3f3" stroke="#b0b0b0" strokeWidth="3">
        du
      </text>
      <text x="11" y="166" fontSize="42" fontFamily="Open Sans" fontWeight="400" strokeWidth="2">
        jingyan.baidu.com
      </text>
    </svg>
  );
}

export default function App() {
  return (
    <div className={`relative flex min-h-screen flex-col overflow-hidden bg-[#f6f8fb] px-[15px] pb-[27px] pt-7 text-[17px] leading-6 font-light text-[#333] ${FONT}`}>
      <div className="flex flex-1 flex-col border border-[#dfe0e2] bg-[#e7e7e7] shadow-[0_0_8px_rgba(0,0,0,0.12)]">
        <header className="border-b border-[#d8d8d8] bg-[#f3f3f3] shadow-[0_1px_3px_rgba(0,0,0,0.12)]">
          <MenuRow />
          <Ribbon />
        </header>
        <main className="flex flex-1">
          <SlidePane />
          <section className="flex min-w-0 flex-1 flex-col">
            <div className="flex flex-1">
              <div className="flex min-w-0 flex-1 items-center px-[190px] pt-[2px]">
                <Slide />
              </div>
              <ScrollBar />
            </div>
            <button className="flex h-9 items-center border-t border-[#d2d2d2] pl-[7px] text-lg text-[#505050]">
              <Svg w={23} h={20} className="text-[#414d6b]">
                <path d="M1 1h21M1 9h21M1 17h10M14 17h6M17 14v6" />
              </Svg>
              <span className="ml-[6px]">单击此处添加备注</span>
            </button>
          </section>
          <ToolRail />
        </main>
        <StatusBar />
      </div>
      <Watermark />
      <Meter className="right-[15px] top-[663px] h-[81px] w-[14px]" h={81} dark={9} />
      <Meter className="right-0 top-[757px] h-[89px] w-[15px]" h={89} dark={8} />
    </div>
  );
}
